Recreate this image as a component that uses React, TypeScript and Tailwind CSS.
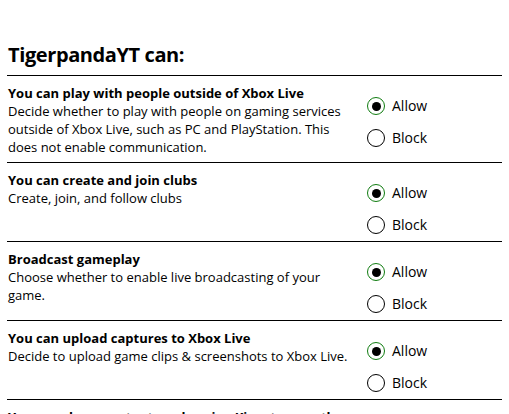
import * as React from "react";

interface Setting {
  title: string;
  description: string;
  value: "allow" | "block";
}

const settings: Setting[] = [
  {
    title: "You can play with people outside of Xbox Live",
    description:
      "Decide whether to play with people on gaming services outside of Xbox Live, such as PC and PlayStation. This does not enable communication.",
    value: "allow",
  },
  {
    title: "You can create and join clubs",
    description: "Create, join, and follow clubs",
    value: "allow",
  },
  {
    title: "Broadcast gameplay",
    description: "Choose whether to enable live broadcasting of your game.",
    value: "allow",
  },
  {
    title: "You can upload captures to Xbox Live",
    description: "Decide to upload game clips & screenshots to Xbox Live.",
    value: "allow",
  },
  {
    title: "You can share content made using Kinect or another camera",
    description: "Decide whether to share content made using Kinect or another camera.",
    value: "allow",
  },
];

const Radio = ({
  label,
  checked,
  onSelect,
}: {
  label: string;
  checked: boolean;
  onSelect: () => void;
}) => (
  <button
    type="button"
    onClick={onSelect}
    className="flex items-center h-[18px] gap-[7px] cursor-pointer"
  >
    <span
      className={
        checked
          ? "flex items-center justify-center w-[18px] h-[18px] rounded-full border-[1.5px] border-[#107c10]"
          : "flex items-center justify-center w-[18px] h-[18px] rounded-full border-[1.5px] border-black"
      }
    >
      {checked && <span className="w-[9px] h-[9px] rounded-full bg-black" />}
    </span>
    <span className="text-[14px] leading-[18px] text-black">{label}</span>
  </button>
);

export default function App() {
  const [values, setValues] = React.useState(settings.map((s) => s.value));

  const setValue = (i: number, v: "allow" | "block") => {
    setValues((prev) => prev.map((p, j) => (j === i ? v : p)));
  };

  return (
    <div
      className="w-[509px] h-[414px] overflow-hidden bg-white pt-[41px] pl-[7px]"
      style={{ fontFamily: '"Open Sans", "Noto Sans", sans-serif' }}
    >
      <h1 className="pl-[1px] pb-[6px] text-[20px] leading-[28px] font-bold tracking-[-0.4px] text-black">
        TigerpandaYT can:
      </h1>
      <div className="w-[495px]">
        {settings.map((s, i) => (
          <div key={i} className="flex border-t border-black pt-[8px] pb-[6px]">
            <div className="w-[350px] pl-[1px] text-[13px] leading-[18px] text-black">
              <div className="font-bold">{s.title}</div>
              <div>{s.description}</div>
            </div>
            <div className="flex flex-col gap-[14px] pt-[13px] pb-[1px] pl-[10px]">
              <Radio
                label="Allow"
                checked={values[i] === "allow"}
                onSelect={() => setValue(i, "allow")}
              />
              <Radio
                label="Block"
                checked={values[i] === "block"}
                onSelect={() => setValue(i, "block")}
              />
            </div>
          </div>
        ))}
      </div>
    </div>
  );
}
